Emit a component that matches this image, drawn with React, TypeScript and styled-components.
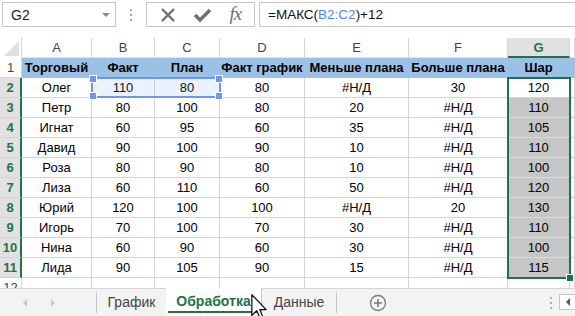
import * as React from 'react';
import styled, { createGlobalStyle } from 'styled-components';

const GlobalStyle = createGlobalStyle`
  html, body {
    margin: 0;
    padding: 0;
    background: #ffffff;
  }
  body {
    font-family: 'Liberation Sans', Arial, sans-serif;
    overflow: hidden;
  }
`;

const GREEN = '#217346';
const GRID = '#d4d4d4';
const COLS = [22, 70, 63, 65, 85, 104, 99, 62, 5];
const LETTERS = ['A', 'B', 'C', 'D', 'E', 'F', 'G', ''];

const headers = ['Торговый', 'Факт', 'План', 'Факт график', 'Меньше плана', 'Больше плана', 'Шар'];

const rows: (string | number)[][] = [
  ['Олег', 110, 80, 80, '#Н/Д', 30, 120],
  ['Петр', 80, 100, 80, 20, '#Н/Д', 110],
  ['Игнат', 60, 95, 60, 35, '#Н/Д', 105],
  ['Давид', 90, 100, 90, 10, '#Н/Д', 110],
  ['Роза', 80, 90, 80, 10, '#Н/Д', 100],
  ['Лиза', 60, 110, 60, 50, '#Н/Д', 120],
  ['Юрий', 120, 100, 100, '#Н/Д', 20, 130],
  ['Игорь', 70, 100, 70, 30, '#Н/Д', 110],
  ['Нина', 60, 90, 60, 30, '#Н/Д', 100],
  ['Лида', 90, 105, 90, 15, '#Н/Д', 115],
];

const Window = styled.div`
  position: relative;
  width: 575px;
  height: 316px;
  display: flex;
  flex-direction: column;
  background: #ffffff;
  overflow: hidden;
`;

const FormulaBar = styled.div`
  height: 38px;
  display: flex;
  align-items: flex-start;
  padding-top: 2px;
  box-sizing: border-box;
`;

const NameBox = styled.div`
  margin-left: 2px;
  width: 114px;
  height: 25px;
  box-sizing: border-box;
  border: 1px solid #c6c6c6;
  display: flex;
  align-items: center;
  justify-content: space-between;
  padding: 0 5px 0 8px;
  font-size: 14px;
  color: #262626;
`;

const DropArrow = styled.span`
  width: 0;
  height: 0;
  border-left: 4px solid transparent;
  border-right: 4px solid transparent;
  border-top: 4px solid #8a8a8a;
`;

const Grip = styled.div`
  width: 30px;
  height: 25px;
  display: flex;
  flex-direction: column;
  align-items: center;
  justify-content: center;
  gap: 3px;

  span {
    width: 2px;
    height: 2px;
    background: #a6a6a6;
  }
`;

const FuncButtons = styled.div`
  width: 109px;
  height: 25px;
  box-sizing: border-box;
  border: 1px solid #c6c6c6;
  display: flex;
  align-items: center;
  justify-content: space-around;
  padding: 0 4px;
`;

const FxLabel = styled.span`
  font-family: 'Liberation Serif', 'Times New Roman', serif;
  font-style: italic;
  font-size: 19px;
  color: #6f6f6f;
  letter-spacing: -1px;
  margin-top: -2px;
`;

const FormulaInput = styled.div`
  flex: 1;
  margin-left: 4px;
  height: 25px;
  box-sizing: border-box;
  border: 1px solid #c6c6c6;
  border-right: none;
  display: flex;
  align-items: center;
  padding-left: 8px;
  font-size: 13.5px;
  color: #111;
`;

const RefText = styled.span`
  color: #4f86e8;
`;

const Sheet = styled.div`
  position: relative;
  height: 250px;
  overflow: hidden;
  display: grid;
  grid-template-columns: ${COLS.map((c) => `${c}px`).join(' ')};
  grid-auto-rows: 20px;
`;

const ColHead = styled.div<{ $active?: boolean }>`
  box-sizing: border-box;
  border-right: 1px solid ${GRID};
  border-bottom: ${(p) => (p.$active ? `2px solid ${GREEN}` : `1px solid #e4e4e4`)};
  background: ${(p) => (p.$active ? '#e1e1e1' : '#ffffff')};
  color: ${(p) => (p.$active ? GREEN : '#444')};
  font-weight: ${(p) => (p.$active ? 700 : 400)};
  font-size: 13px;
  display: flex;
  align-items: center;
  justify-content: center;
`;

const Corner = styled.div`
  box-sizing: border-box;
  border-right: 1px solid ${GRID};
  display: flex;
  align-items: flex-end;
  justify-content: flex-end;
  padding: 0 2px 2px 0;
`;

const RowHead = styled.div<{ $active?: boolean }>`
  box-sizing: border-box;
  border-bottom: 1px solid ${GRID};
  border-right: ${(p) => (p.$active ? `2px solid ${GREEN}` : `1px solid ${GRID}`)};
  background: ${(p) => (p.$active ? '#e1e1e1' : '#ffffff')};
  color: ${(p) => (p.$active ? GREEN : '#444')};
  font-weight: ${(p) => (p.$active ? 700 : 400)};
  font-size: 13px;
  display: flex;
  align-items: center;
  justify-content: center;
`;

const Cell = styled.div<{ $fill?: string; $line?: string; $bold?: boolean }>`
  box-sizing: border-box;
  background: ${(p) => p.$fill || '#ffffff'};
  border-right: 1px solid ${(p) => p.$line || GRID};
  border-bottom: 1px solid ${(p) => p.$line || GRID};
  font-size: 13px;
  font-weight: ${(p) => (p.$bold ? 700 : 400)};
  color: #000;
  display: flex;
  align-items: center;
  justify-content: center;
  white-space: nowrap;
  overflow: hidden;
`;

const RefRange = styled.div`
  position: absolute;
  left: 91px;
  top: 39px;
  width: 130px;
  height: 21px;
  box-sizing: border-box;
  border: 2px solid #6f98e6;
  background: rgba(111, 152, 230, 0.13);
`;

const Handle = styled.span<{ $x: 'left' | 'right'; $y: 'top' | 'bottom' }>`
  position: absolute;
  ${(p) => p.$x}: -4px;
  ${(p) => p.$y}: -4px;
  width: 6px;
  height: 6px;
  background: #6f98e6;
  border: 1px solid #ffffff;
`;

const Selection = styled.div`
  position: absolute;
  left: 507px;
  top: 39px;
  width: 64px;
  height: 202px;
  box-sizing: border-box;
  border: 2px solid ${GREEN};
`;

const FillHandle = styled.span`
  position: absolute;
  right: -5px;
  bottom: -5px;
  width: 6px;
  height: 6px;
  background: ${GREEN};
  border: 1px solid #ffffff;
`;

const TabBar = styled.div`
  height: 28px;
  display: flex;
  align-items: stretch;
  background: #f3f3f3;
  border-top: 1px solid ${GRID};
  box-sizing: border-box;
  font-size: 14px;
  color: #444;
`;

const NavArea = styled.div`
  width: 96px;
  display: flex;
  align-items: center;
  padding-left: 23px;
  gap: 24px;
  box-sizing: border-box;
`;

const NavArrow = styled.span<{ $dir: 'left' | 'right' }>`
  width: 0;
  height: 0;
  border-top: 4px solid transparent;
  border-bottom: 4px solid transparent;
  ${(p) =>
    p.$dir === 'left'
      ? 'border-right: 4px solid #c8c8c8;'
      : 'border-left: 4px solid #c8c8c8;'}
`;

const Divider = styled.span`
  width: 1px;
  align-self: center;
  height: 21px;
  background: #c6c6c6;
`;

const Tab = styled.div<{ $active?: boolean; $width: number }>`
  position: relative;
  width: ${(p) => p.$width}px;
  box-sizing: border-box;
  display: flex;
  align-items: center;
  justify-content: center;
  padding-bottom: 2px;
  background: ${(p) => (p.$active ? '#ffffff' : 'transparent')};
  margin-top: ${(p) => (p.$active ? '-1px' : '0')};
  color: ${(p) => (p.$active ? GREEN : '#444')};
  font-weight: ${(p) => (p.$active ? 700 : 400)};

  &::after {
    content: '';
    display: ${(p) => (p.$active ? 'block' : 'none')};
    position: absolute;
    left: 2px;
    right: 0;
    bottom: 3px;
    height: 2px;
    background: ${GREEN};
  }
`;

const PlainTab = styled(Tab)`
  border-left: 1px solid #c6c6c6;
`;

const AddSheet = styled.div`
  width: 82px;
  display: flex;
  align-items: center;
  justify-content: center;
`;

const Spacer = styled.div`
  flex: 1;
`;

const MoreDots = styled.div`
  width: 16px;
  display: flex;
  flex-direction: column;
  align-items: center;
  justify-content: center;
  gap: 3px;

  span {
    width: 2px;
    height: 2px;
    background: #b0b0b0;
  }
`;

const ScrollBox = styled.div`
  width: 15px;
  margin: 5px 0 6px;
  border: 1px solid #c6c6c6;
  border-right: none;
  background: #ffffff;
  display: flex;
  align-items: center;
  justify-content: center;
`;

const Cursor = styled.svg`
  position: absolute;
  left: 251px;
  top: 294px;
`;

export default function App() {
  return (
    <>
      <GlobalStyle />
      <Window>
        <FormulaBar>
          <NameBox>
            G2
            <DropArrow />
          </NameBox>
          <Grip>
            <span />
            <span />
            <span />
          </Grip>
          <FuncButtons>
            <svg width="16" height="16" viewBox="0 0 16 16">
              <path d="M2 2 L14 14 M14 2 L2 14" stroke="#6f6f6f" strokeWidth="2.4" />
            </svg>
            <svg width="19" height="16" viewBox="0 0 19 16">
              <path d="M2 8 L7 13 L17 3" stroke="#6f6f6f" strokeWidth="3.4" fill="none" />
            </svg>
            <FxLabel>fx</FxLabel>
          </FuncButtons>
          <FormulaInput>
            =МАКС(<RefText>B2:C2</RefText>)+12
          </FormulaInput>
        </FormulaBar>

        <Sheet>
          <Corner>
            <svg width="15" height="15" viewBox="0 0 15 15">
              <path d="M15 0 L15 15 L0 15 Z" fill="#dfdfdf" />
            </svg>
          </Corner>
          {LETTERS.map((l, i) => (
            <ColHead key={i} $active={l === 'G'}>
              {l}
            </ColHead>
          ))}

          <RowHead>1</RowHead>
          {headers.map((h) => (
            <Cell key={h} $fill="#9bc2e6" $line="#9bc2e6" $bold>
              {h}
            </Cell>
          ))}
          <Cell $fill="#9bc2e6" $line="#9bc2e6" />

          {rows.map((row, r) => (
            <React.Fragment key={r}>
              <RowHead $active>{r + 2}</RowHead>
              {row.map((v, c) => {
                const shaded = c === 6 && r > 0;
                return (
                  <Cell
                    key={c}
                    $fill={shaded ? '#c6c6c6' : undefined}
                    $line={shaded ? '#dcdcdc' : undefined}
                  >
                    {v}
                  </Cell>
                );
              })}
              <Cell />
            </React.Fragment>
          ))}

          <RowHead>12</RowHead>
          {LETTERS.map((_, i) => (
            <Cell key={i} />
          ))}

          <RefRange>
            <Handle $x="left" $y="top" />
            <Handle $x="right" $y="top" />
            <Handle $x="left" $y="bottom" />
            <Handle $x="right" $y="bottom" />
          </RefRange>
          <Selection>
            <FillHandle />
          </Selection>
        </Sheet>

        <TabBar>
          <NavArea>
            <NavArrow $dir="left" />
            <NavArrow $dir="right" />
          </NavArea>
          <Divider />
          <Tab $width={69}>График</Tab>
          <Tab $width={95} $active>
            Обработка
          </Tab>
          <PlainTab $width={75}>Данные</PlainTab>
          <Divider />
          <AddSheet>
            <svg width="18" height="18" viewBox="0 0 18 18">
              <circle cx="9" cy="9" r="7.5" fill="none" stroke="#7a7a7a" strokeWidth="1.3" />
              <path d="M9 5 V13 M5 9 H13" stroke="#7a7a7a" strokeWidth="1.6" />
            </svg>
          </AddSheet>
          <Spacer />
          <MoreDots>
            <span />
            <span />
            <span />
          </MoreDots>
          <ScrollBox>
            <NavArrow $dir="left" style={{ borderRightColor: '#555' }} />
          </ScrollBox>
        </TabBar>

        <Cursor width="16" height="26" viewBox="0 0 12 20">
          <path
            d="M0.5 0.5 L0.5 16.5 L4.3 12.8 L6.8 18.8 L9 17.9 L6.6 12 L11.5 12 Z"
            fill="#ffffff"
            stroke="#000000"
            strokeWidth="0.9"
            strokeLinejoin="round"
          />
        </Cursor>
      </Window>
    </>
  );
}
